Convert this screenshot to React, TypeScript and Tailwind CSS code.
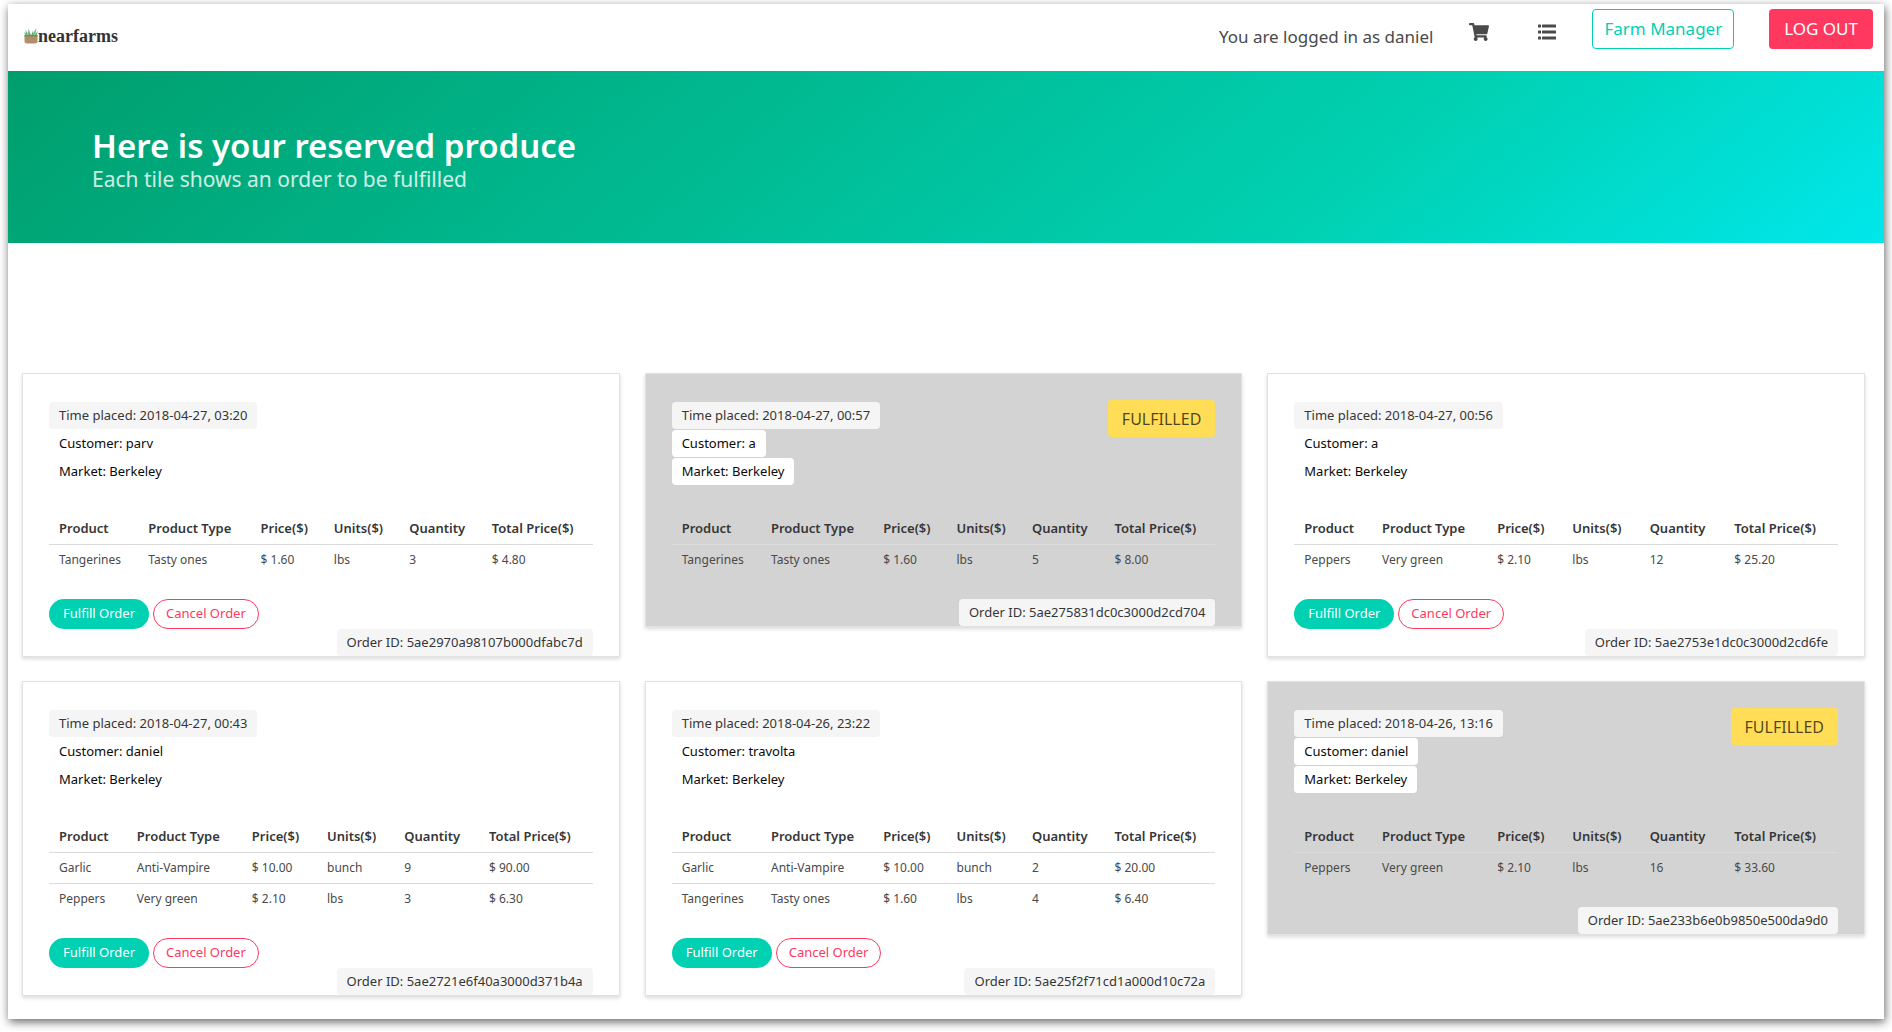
import React from "react";
import { FaShoppingCart } from "react-icons/fa";

type Item = { product: string; type: string; price: string; units: string; quantity: number; total: string };
type Order = { id: string; time: string; customer: string; market: string; fulfilled: boolean; items: Item[] };

const tangerines = { product: "Tangerines", type: "Tasty ones", price: "1.60", units: "lbs" };
const peppers = { product: "Peppers", type: "Very green", price: "2.10", units: "lbs" };
const garlic = { product: "Garlic", type: "Anti-Vampire", price: "10.00", units: "bunch" };

const orders: Order[] = [
  { id: "5ae2970a98107b000dfabc7d", time: "2018-04-27, 03:20", customer: "parv", market: "Berkeley", fulfilled: false, items: [{ ...tangerines, quantity: 3, total: "4.80" }] },
  { id: "5ae275831dc0c3000d2cd704", time: "2018-04-27, 00:57", customer: "a", market: "Berkeley", fulfilled: true, items: [{ ...tangerines, quantity: 5, total: "8.00" }] },
  { id: "5ae2753e1dc0c3000d2cd6fe", time: "2018-04-27, 00:56", customer: "a", market: "Berkeley", fulfilled: false, items: [{ ...peppers, quantity: 12, total: "25.20" }] },
  { id: "5ae2721e6f40a3000d371b4a", time: "2018-04-27, 00:43", customer: "daniel", market: "Berkeley", fulfilled: false, items: [{ ...garlic, quantity: 9, total: "90.00" }, { ...peppers, quantity: 3, total: "6.30" }] },
  { id: "5ae25f2f71cd1a000d10c72a", time: "2018-04-26, 23:22", customer: "travolta", market: "Berkeley", fulfilled: false, items: [{ ...garlic, quantity: 2, total: "20.00" }, { ...tangerines, quantity: 4, total: "6.40" }] },
  { id: "5ae233b6e0b9850e500da9d0", time: "2018-04-26, 13:16", customer: "daniel", market: "Berkeley", fulfilled: true, items: [{ ...peppers, quantity: 16, total: "33.60" }] },
];

const headings = ["Product", "Product Type", "Price($)", "Units($)", "Quantity", "Total Price($)"];

function Basket() {
  return (
    <svg viewBox="0 0 28 32" className="h-4 w-[14px]" aria-hidden="true">
      <path d="M3 3 L9 15 H3 L0 8 L4 11 Z M9 1 L14 15 H8 Z M25 0 L22 15 H16 Z M18 5 L19 15 H14 Z M28 6 L25 15 H20 Z" fill="#5fae74" />
      <path d="M6 8 L10 15 H5 Z M21 7 L22 15 H18 Z" fill="#8fcf9d" />
      <path d="M1 14 H27 V26 Q27 31 22 31 H6 Q1 31 1 26 Z" fill="#b08f6c" />
      <rect x="1" y="14" width="26" height="3" fill="#9c7a58" />
    </svg>
  );
}

function ListIcon() {
  return (
    <svg viewBox="0 0 18 16" className="h-4 w-[18px]" fill="currentColor" aria-hidden="true">
      <rect x="0" y="0.5" width="3" height="3" rx="0.5" />
      <rect x="0" y="6.5" width="3" height="3" rx="0.5" />
      <rect x="0" y="12.5" width="3" height="3" rx="0.5" />
      <rect x="4" y="0.5" width="14" height="3" rx="0.5" />
      <rect x="4" y="6.5" width="14" height="3" rx="0.5" />
      <rect x="4" y="12.5" width="14" height="3" rx="0.5" />
    </svg>
  );
}

function Tag({ tone, children }: { tone: "light" | "white"; children: React.ReactNode }) {
  return (
    <span className={"inline-flex h-[27px] items-center rounded px-[10px] text-[13px] whitespace-nowrap " + (tone === "light" ? "bg-[#f5f5f5] text-[#363636]" : "bg-white text-[#0a0a0a]")}>
      {children}
    </span>
  );
}

function OrderCard({ order }: { order: Order }) {
  return (
    <article className={"border border-[#e2e2e2] px-[26px] pt-[26px] shadow-[0_2px_4px_rgba(10,10,10,0.15)] " + (order.fulfilled ? "bg-[#d3d3d3]" : "bg-white")}>
      <div className="flex items-start justify-between">
        <div className="flex flex-col items-start gap-px pt-0.5">
          <Tag tone="light">Time placed: {order.time}</Tag>
          <Tag tone="white">Customer: {order.customer}</Tag>
          <Tag tone="white">Market: {order.market}</Tag>
        </div>
        {order.fulfilled && (
          <span className="flex h-[37px] items-center rounded bg-[#ffdd57] px-[14px] text-[16px] text-black/70">FULFILLED</span>
        )}
      </div>
      <table className="mt-7 mb-6 w-full text-left text-[#4a4a4a]">
        <thead>
          <tr className="h-[31px] border-b border-[#dbdbdb] text-[13px]">
            {headings.map((h) => (
              <th key={h} scope="col" className="px-[10px] font-semibold whitespace-nowrap text-[#363636]">{h}</th>
            ))}
          </tr>
        </thead>
        <tbody className="text-[12px]">
          {order.items.map((item) => (
            <tr key={item.product} className="h-[31px] border-b border-[#dbdbdb] last:border-b-0">
              <td className="px-[10px]">{item.product}</td>
              <td className="px-[10px]">{item.type}</td>
              <td className="px-[10px]">$ {item.price}</td>
              <td className="px-[10px]">{item.units}</td>
              <td className="px-[10px]">{item.quantity}</td>
              <td className="px-[10px]">$ {item.total}</td>
            </tr>
          ))}
        </tbody>
      </table>
      {!order.fulfilled && (
        <div className="flex gap-1">
          <button type="button" className="h-[30px] rounded-full bg-[#00d1b2] px-[14px] text-[13px] text-white">Fulfill Order</button>
          <button type="button" className="h-[30px] rounded-full border border-[#ff3860] bg-white px-3 text-[13px] text-[#ff3860]">Cancel Order</button>
        </div>
      )}
      <div className="flex justify-end">
        <Tag tone="light">Order ID: {order.id}</Tag>
      </div>
    </article>
  );
}

export default function App() {
  return (
    <div className="bg-white px-2 pt-1 pb-3 font-['Noto_Sans',sans-serif]">
      <div className="bg-white shadow-[1px_3px_9px_rgba(0,0,0,0.6)]">
        <header className="flex h-[67px] items-start justify-between pt-[5px] pr-[11px] pl-4">
          <a href="#home" className="flex h-[54px] items-center font-['Liberation_Serif',serif] text-[18px] font-bold text-[#333]">
            <Basket />
            nearfarms
          </a>
          <nav className="flex items-start text-[17px] text-[#4a4a4a]">
            <span className="mr-9 leading-[56px]">You are logged in as daniel</span>
            <a href="#cart" aria-label="Cart" className="mr-[49px] flex h-[46px] items-center"><FaShoppingCart size={20} /></a>
            <a href="#orders" aria-label="Orders" className="mr-9 flex h-[46px] items-center"><ListIcon /></a>
            <button type="button" className="mr-[35px] h-10 rounded border border-[#00d1b2] bg-white px-[11px] text-[#00d1b2]">Farm Manager</button>
            <button type="button" className="h-10 rounded bg-[#ff3860] px-[15px] text-white">LOG OUT</button>
          </nav>
        </header>
        <section className="h-[172px] bg-[linear-gradient(141deg,#009e6c_0%,#00d1b2_71%,#00e7eb_100%)] px-[84px] pt-[54px]">
          <h1 className="text-[33px] leading-[41px] font-semibold text-white">Here is your reserved produce</h1>
          <p className="text-[21px] leading-[26px] text-white/80">Each tile shows an order to be fulfilled</p>
        </section>
        <main className="grid grid-cols-3 items-start gap-x-[25px] gap-y-6 pt-[130px] pr-[19px] pb-[23px] pl-[14px]">
          {orders.map((order) => (
            <OrderCard key={order.id} order={order} />
          ))}
        </main>
      </div>
    </div>
  );
}
